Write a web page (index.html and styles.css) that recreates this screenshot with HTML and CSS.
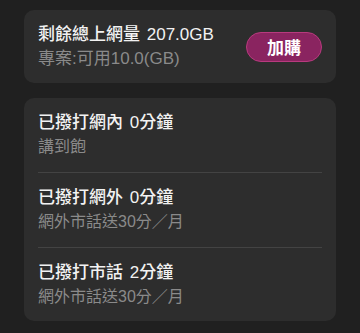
FILE: index.html
```html
<!DOCTYPE html>
<html lang="zh-Hant">
<head>
<meta charset="utf-8">
<link rel="stylesheet" href="styles.css">
</head>
<body>
<main class="page">
  <section class="card usage">
    <div class="usage-text">
      <div class="title">剩餘總上網量 207.0GB</div>
      <div class="sub sub-lg">專案:可用10.0(GB)</div>
    </div>
    <button class="buy">加購</button>
  </section>
  <section class="card calls">
    <div class="row">
      <div class="title">已撥打網內 0分鐘</div>
      <div class="sub">講到飽</div>
    </div>
    <div class="row">
      <div class="title">已撥打網外 0分鐘</div>
      <div class="sub">網外市話送30分／月</div>
    </div>
    <div class="row">
      <div class="title">已撥打市話 2分鐘</div>
      <div class="sub">網外市話送30分／月</div>
    </div>
  </section>
</main>
</body>
</html>
```
FILE: styles.css
```css
html, body {
  margin: 0;
  padding: 0;
  background: #202020;
}
body {
  width: 360px;
  height: 333px;
  overflow: hidden;
  font-family: "Liberation Sans", "Noto Sans CJK TC", sans-serif;
}
.page {
  padding: 10px 24px 0;
  display: flex;
  flex-direction: column;
  gap: 15px;
}
.card {
  background: #2d2d2d;
  border-radius: 10px;
}
.usage {
  display: flex;
  align-items: center;
  justify-content: space-between;
  padding: 13px 14px 12px;
}
.title {
  color: #f2f2f2;
  font-size: 17px;
  font-weight: 500;
  line-height: 24px;
  word-spacing: 2px;
}
.sub {
  color: #8a8a8a;
  font-size: 16px;
  line-height: 24px;
}
.sub-lg {
  font-size: 17px;
}
.buy {
  width: 76px;
  height: 30px;
  border-radius: 15px;
  background: #8a2460;
  border: 1.5px solid #b83a7e;
  color: #ffffff;
  font-family: "Noto Sans CJK TC", sans-serif;
  font-size: 17px;
  font-weight: 700;
  padding: 0;
  line-height: 26px;
}
.calls {
  padding: 0 14px;
}
.row {
  padding: 13px 0 13px;
  border-bottom: 1px solid #434343;
}
.row:last-child {
  border-bottom: none;
  padding-bottom: 12px;
}
```
